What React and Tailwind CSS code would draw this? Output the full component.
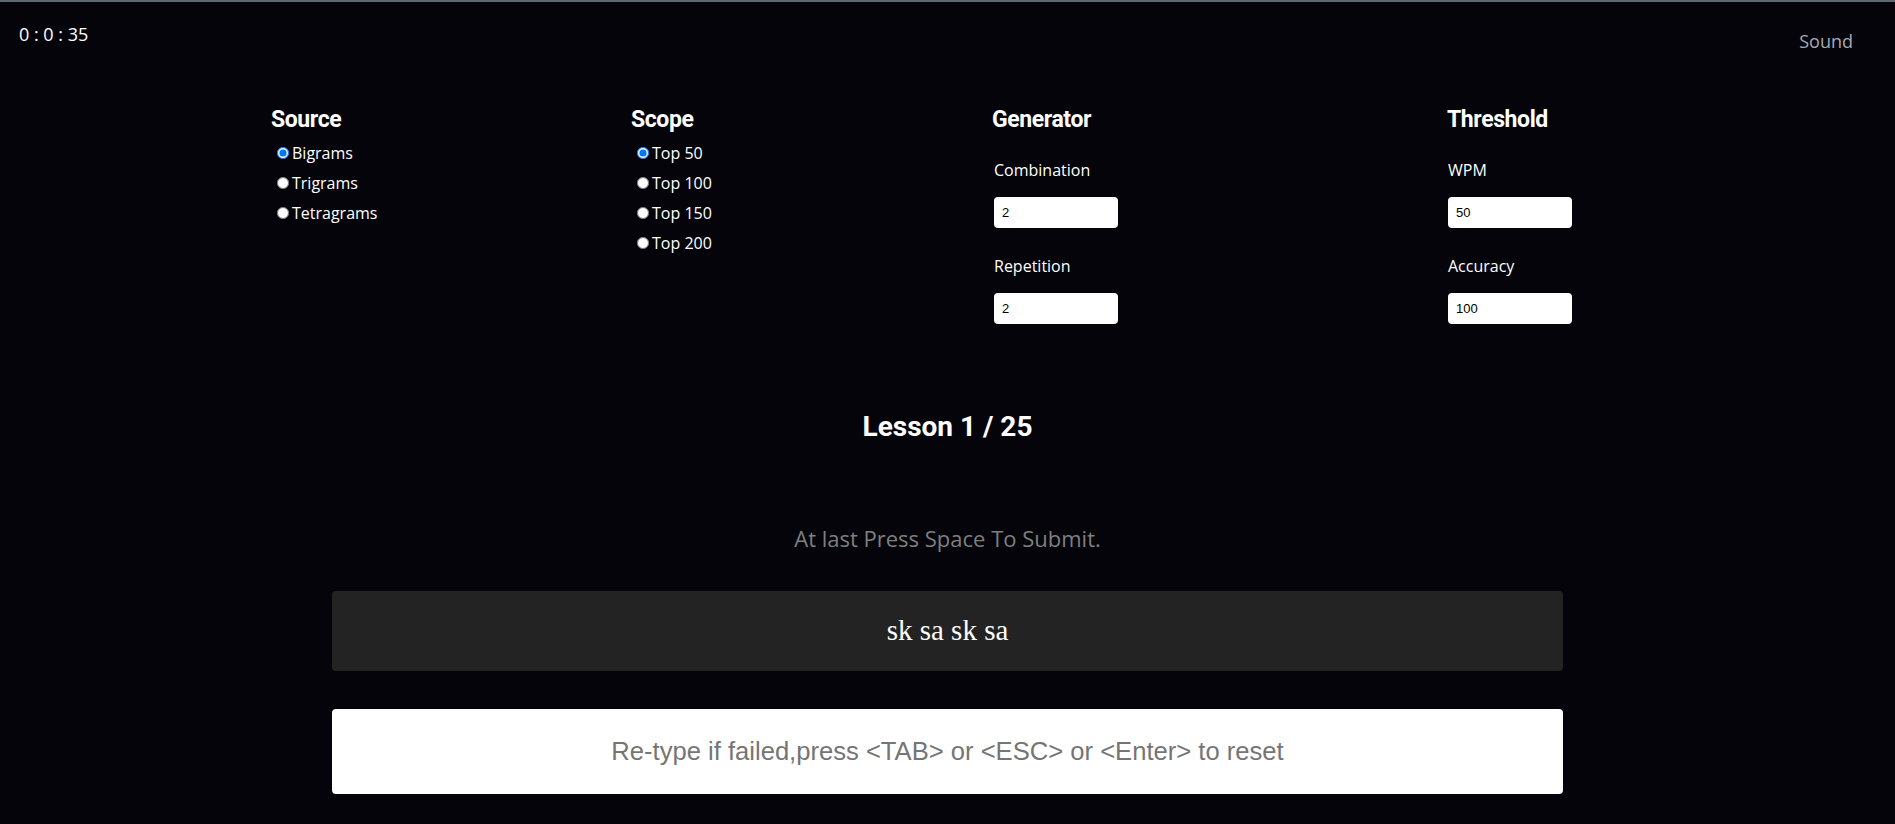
import { useState } from "react";

const sources = ["Bigrams", "Trigrams", "Tetragrams"];
const scopes = ["Top 50", "Top 100", "Top 150", "Top 200"];

const heading = "text-[23px] font-bold leading-[26px] tracking-[-0.4px] text-white [font-family:Roboto,sans-serif]";
const label = "text-[16px] leading-[22px] text-white [font-family:'Open_Sans',sans-serif]";

function RadioGroup({ title, items, value, onChange, name }) {
  return (
    <div>
      <h2 className={heading}>{title}</h2>
      <div className="mt-[5px] flex flex-col">
        {items.map((item) => (
          <label key={item} className={`flex h-[30px] items-center ${label}`}>
            <input
              type="radio"
              name={name}
              checked={value === item}
              onChange={() => onChange(item)}
              className="ml-[6px] mr-[3px] h-[12px] w-[12px] accent-[#0075ff]"
            />
            {item}
          </label>
        ))}
      </div>
    </div>
  );
}

function Field({ title, value }) {
  return (
    <div>
      <div className={label}>{title}</div>
      <input
        defaultValue={value}
        className="mt-[16px] h-[31px] w-[124px] rounded-[4px] bg-white px-[8px] text-[13px] text-black outline-none [font-family:'Liberation_Sans',Arial,sans-serif]"
      />
    </div>
  );
}

export default function App() {
  const [source, setSource] = useState("Bigrams");
  const [scope, setScope] = useState("Top 50");

  return (
    <div className="min-h-screen w-full border-t-2 border-[#5c6770] bg-[#04040a] [font-family:'Open_Sans',sans-serif]">
      <header className="flex items-start justify-between pl-[19px] pr-[42px] pt-[20px]">
        <span className="text-[18px] font-medium leading-[24px] text-white">0 : 0 : 35</span>
        <span className="mt-[7px] text-[18px] leading-[24px] text-[#a3aab8]">Sound</span>
      </header>

      <section className="mt-[54px] flex pl-[271px]">
        <div className="w-[360px]">
          <RadioGroup title="Source" items={sources} value={source} onChange={setSource} name="source" />
        </div>
        <div className="w-[361px]">
          <RadioGroup title="Scope" items={scopes} value={scope} onChange={setScope} name="scope" />
        </div>
        <div className="w-[455px]">
          <h2 className={heading}>Generator</h2>
          <div className="mt-[26px] flex flex-col gap-[27px] pl-[2px]">
            <Field title="Combination" value="2" />
            <Field title="Repetition" value="2" />
          </div>
        </div>
        <div>
          <h2 className={heading}>Threshold</h2>
          <div className="mt-[26px] flex flex-col gap-[27px] pl-[1px]">
            <Field title="WPM" value="50" />
            <Field title="Accuracy" value="100" />
          </div>
        </div>
      </section>

      <section className="mt-[86px] flex flex-col items-center">
        <h1 className="text-[28px] font-bold leading-[34px] text-white [font-family:Roboto,sans-serif]">Lesson 1 / 25</h1>
        <p className="mt-[79px] text-[22px] leading-[30px] text-[#7f7f7f]">At last Press Space To Submit.</p>

        <div className="mt-[38px] flex h-[80px] w-[1231px] items-center justify-center rounded-[4px] bg-[#232323]">
          <span className="text-[29px] text-white [font-family:'Liberation_Serif',serif]">sk sa sk sa</span>
        </div>

        <input
          placeholder="Re-type if failed,press <TAB> or <ESC> or <Enter> to reset"
          className="mt-[38px] h-[85px] w-[1231px] rounded-[4px] bg-white text-center text-[25.6px] text-black outline-none placeholder:text-[#757575] [font-family:'Liberation_Sans',Arial,sans-serif]"
        />
      </section>
    </div>
  );
}
